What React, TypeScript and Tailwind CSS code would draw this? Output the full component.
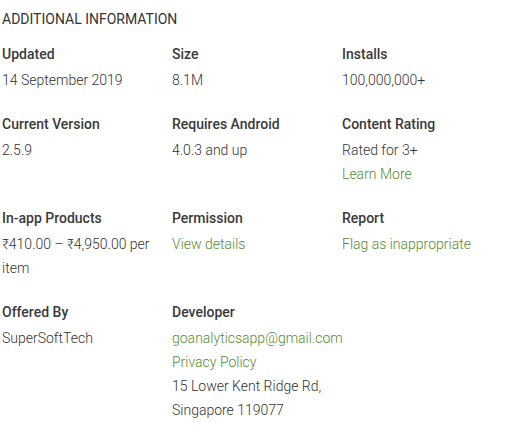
import React from "react";

type Item = { label: string; lines: { text: string; link?: boolean }[] };

const rows: Item[][] = [
  [
    { label: "Updated", lines: [{ text: "14 September 2019" }] },
    { label: "Size", lines: [{ text: "8.1M" }] },
    { label: "Installs", lines: [{ text: "100,000,000+" }] },
  ],
  [
    { label: "Current Version", lines: [{ text: "2.5.9" }] },
    { label: "Requires Android", lines: [{ text: "4.0.3 and up" }] },
    {
      label: "Content Rating",
      lines: [{ text: "Rated for 3+" }, { text: "Learn More", link: true }],
    },
  ],
  [
    { label: "In-app Products", lines: [{ text: "₹410.00 – ₹4,950.00 per item" }] },
    { label: "Permission", lines: [{ text: "View details", link: true }] },
    { label: "Report", lines: [{ text: "Flag as inappropriate", link: true }] },
  ],
  [
    { label: "Offered By", lines: [{ text: "SuperSoftTech" }] },
    {
      label: "Developer",
      lines: [
        { text: "goanalyticsapp@gmail.com", link: true },
        { text: "Privacy Policy", link: true },
        { text: "15 Lower Kent Ridge Rd, Singapore 119077" },
      ],
    },
  ],
];

export default function App() {
  return (
    <div
      className="w-[530px] h-[447px] bg-white pl-[2px] pt-[8px] text-[#333333]"
      style={{ fontFamily: "Roboto, 'Noto Sans', sans-serif" }}
    >
      <div className="text-[14px] leading-[22px] font-normal uppercase">
        Additional Information
      </div>
      <div className="mt-[12px] flex flex-col gap-[20px]">
        {rows.map((row, i) => (
          <div key={i} className="flex">
            {row.map((it) => (
              <div key={it.label} className="w-[170px] pr-[10px]">
                <div className="text-[14px] leading-[24px] font-medium text-[#3a3a3a]">
                  {it.label}
                </div>
                <div className="mt-[2px] text-[14px] leading-[24px] font-light">
                  {it.lines.map((l, k) => (
                    <div key={k} className={l.link ? "text-[#558b2f]" : "text-[#333333]"}>
                      {l.text}
                    </div>
                  ))}
                </div>
              </div>
            ))}
          </div>
        ))}
      </div>
    </div>
  );
}
